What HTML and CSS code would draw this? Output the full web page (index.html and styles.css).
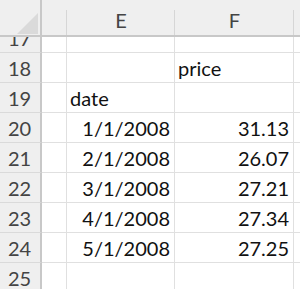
FILE: index.html
```html
<!DOCTYPE html>
<html>
<head>
<meta charset="utf-8">
<link rel="stylesheet" href="styles.css">
</head>
<body>
<div class="sheet">
  <div class="corner"><svg class="tri" width="42" height="35" viewBox="0 0 42 35"><polygon points="17,34 38,34 38,13" fill="#dadada"/></svg></div>
  <div class="colhdr"></div>
  <div class="colhdr">E</div>
  <div class="colhdr">F</div>
  <div class="colhdr last"></div>

  <div class="rowhdr short">17</div>
  <div class="cell short"></div><div class="cell short"></div><div class="cell short"></div><div class="cell short last"></div>

  <div class="rowhdr">18</div>
  <div class="cell"></div><div class="cell"></div><div class="cell">price</div><div class="cell last"></div>

  <div class="rowhdr">19</div>
  <div class="cell"></div><div class="cell">date</div><div class="cell"></div><div class="cell last"></div>

  <div class="rowhdr">20</div>
  <div class="cell"></div><div class="cell num">1/1/2008</div><div class="cell num">31.13</div><div class="cell last"></div>

  <div class="rowhdr">21</div>
  <div class="cell"></div><div class="cell num">2/1/2008</div><div class="cell num">26.07</div><div class="cell last"></div>

  <div class="rowhdr">22</div>
  <div class="cell"></div><div class="cell num">3/1/2008</div><div class="cell num">27.21</div><div class="cell last"></div>

  <div class="rowhdr">23</div>
  <div class="cell"></div><div class="cell num">4/1/2008</div><div class="cell num">27.34</div><div class="cell last"></div>

  <div class="rowhdr">24</div>
  <div class="cell"></div><div class="cell num">5/1/2008</div><div class="cell num">27.25</div><div class="cell last"></div>

  <div class="rowhdr">25</div>
  <div class="cell"></div><div class="cell"></div><div class="cell"></div><div class="cell last"></div>
</div>
</body>
</html>
```
FILE: styles.css
```css
html, body {
  margin: 0;
  padding: 0;
  background: #ffffff;
  overflow: hidden;
}
.sheet {
  width: 300px;
  height: 289px;
  overflow: hidden;
  display: grid;
  grid-template-columns: 42px 25px 108px 119px 20px;
  grid-template-rows: 37px 16px repeat(8, 30px);
  font-family: "Lato", "Liberation Sans", sans-serif;
  font-size: 20px;
  line-height: 24px;
  color: #111111;
}
.sheet > div {
  box-sizing: border-box;
  display: flex;
  align-items: flex-end;
  overflow: hidden;
  white-space: nowrap;
}
.corner {
  background: #efefef;
  border-right: 2px solid #c8c8c8;
  border-bottom: 2px solid #c8c8c8;
}
.tri {
  display: block;
  flex: none;
}
.colhdr {
  background-color: #efefef;
  background-image: linear-gradient(#d6d6d6, #d6d6d6);
  background-size: 1px calc(100% - 10px);
  background-position: right bottom;
  background-repeat: no-repeat;
  border-bottom: 2px solid #c8c8c8;
  justify-content: center;
  padding-bottom: 3px;
  color: #444444;
}
.colhdr.last {
  background-image: none;
}
.rowhdr {
  background: #efefef;
  border-right: 2px solid #c8c8c8;
  border-bottom: 1px solid #dadada;
  justify-content: center;
  padding-bottom: 2px;
  padding-right: 1px;
  color: #444444;
}
.cell {
  border-right: 1px solid #e0e0e0;
  border-bottom: 1px solid #e0e0e0;
  padding: 0 3px 2px 3px;
}
.cell.last {
  border-right: none;
}
.num {
  justify-content: flex-end;
  padding-right: 4px;
}
.short {
  align-items: flex-end;
}
```
